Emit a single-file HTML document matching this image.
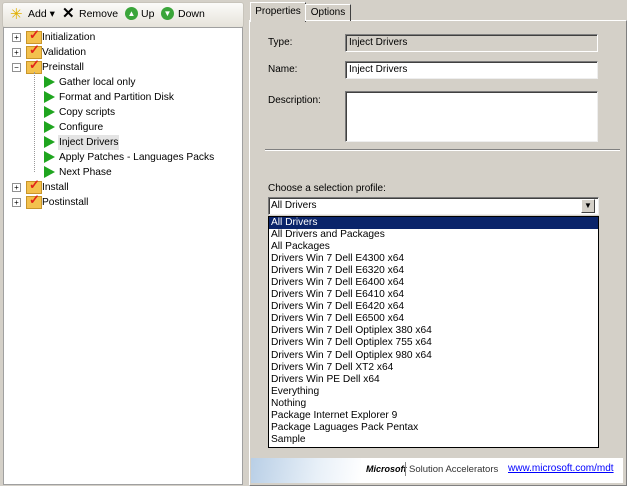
<!DOCTYPE html>
<html><head><style>
body{margin:0;width:627px;height:486px;background:#d4d0c8;font-family:"Liberation Sans",Arial,sans-serif;font-size:10px;position:relative;overflow:hidden}
.a{position:absolute}
.tb{left:2px;top:2px;width:240px;height:24px;background:linear-gradient(#fbfbf9,#e6e3da);border:1px solid #c8c4bb;border-radius:3px}
.tree{left:3px;top:27px;width:238px;height:456px;background:#fff;border:1px solid #a0a0a0}
.row{position:absolute;height:15px;line-height:15px;font-size:10.2px;white-space:nowrap}
.pm{position:absolute;width:7px;height:7px;border:1px solid #919191;background:#fff;font-size:8px;line-height:7px;text-align:center;color:#000}
.fold{position:absolute;width:14px;height:11px;background:#f3c14d;border:1px solid #c8952a}
.chk{position:absolute;color:#e2231a;font-weight:bold;font-size:13px}
.tri{position:absolute;width:0;height:0;border-left:11px solid #1fa51f;border-top:6px solid transparent;border-bottom:6px solid transparent}
.inp{background:#fff;border:1px solid #7a7a7a;border-right-color:#eee;border-bottom-color:#eee;box-shadow:inset 1px 1px 0 #404040}
.li{height:12.05px;line-height:12px;padding-left:2px;font-size:10.2px}
.circ{position:absolute;width:13px;height:13px;border-radius:50%;background:#3aa53a;color:#fff;font-size:8px;text-align:center;line-height:13px}
</style></head><body>
<div class="a tb"></div>
<div class="a" style="left:10px;top:5px;color:#e0b000;font-size:15px">✳</div>
<div class="a" style="left:28px;top:8px;font-size:10.5px">Add ▾</div>
<div class="a" style="left:62px;top:4px;font-size:15px;font-weight:bold">✕</div>
<div class="a" style="left:79px;top:8px;font-size:10.5px">Remove</div>
<div class="circ" style="left:125px;top:7px">▲</div>
<div class="a" style="left:141px;top:8px;font-size:10.5px">Up</div>
<div class="circ" style="left:161px;top:7px">▼</div>
<div class="a" style="left:178px;top:8px;font-size:10.5px">Down</div>
<div class="a tree"></div>
<div class="a" style="left:0;top:0">
<div class="pm" style="left:12px;top:33px">+</div><div class="fold" style="left:26px;top:31px"></div><div class="chk" style="left:29px;top:27px">✓</div><div class="row" style="left:42px;top:30px">Initialization</div>
<div class="pm" style="left:12px;top:48px">+</div><div class="fold" style="left:26px;top:46px"></div><div class="chk" style="left:29px;top:42px">✓</div><div class="row" style="left:42px;top:45px">Validation</div>
<div class="pm" style="left:12px;top:63px">−</div><div class="fold" style="left:26px;top:61px"></div><div class="chk" style="left:29px;top:57px">✓</div><div class="row" style="left:42px;top:60px">Preinstall</div>
<div style="position:absolute;left:34px;top:72px;height:100px;border-left:1px dotted #999"></div>
<div class="tri" style="left:44px;top:76px"></div><div class="row" style="left:59px;top:75px">Gather local only</div>
<div class="tri" style="left:44px;top:91px"></div><div class="row" style="left:59px;top:90px">Format and Partition Disk</div>
<div class="tri" style="left:44px;top:106px"></div><div class="row" style="left:59px;top:105px">Copy scripts</div>
<div class="tri" style="left:44px;top:121px"></div><div class="row" style="left:59px;top:120px">Configure</div>
<div class="tri" style="left:44px;top:136px"></div><div class="row" style="left:58px;top:135px;background:#e4e4e4;padding:0 1px">Inject Drivers</div>
<div class="tri" style="left:44px;top:151px"></div><div class="row" style="left:59px;top:150px">Apply Patches - Languages Packs</div>
<div class="tri" style="left:44px;top:166px"></div><div class="row" style="left:59px;top:165px">Next Phase</div>
<div class="pm" style="left:12px;top:183px">+</div><div class="fold" style="left:26px;top:181px"></div><div class="chk" style="left:29px;top:177px">✓</div><div class="row" style="left:42px;top:180px">Install</div>
<div class="pm" style="left:12px;top:198px">+</div><div class="fold" style="left:26px;top:196px"></div><div class="chk" style="left:29px;top:192px">✓</div><div class="row" style="left:42px;top:195px">Postinstall</div>
</div>
<div class="a" style="left:249px;top:20px;width:376px;height:464px;border:1px solid #fff;border-right-color:#808080;border-bottom-color:#808080"></div>
<div class="a" style="left:250px;top:2px;width:54px;height:19px;background:#d4d0c8;border:1px solid #fff;border-bottom:none;border-right-color:#404040;line-height:18px;text-align:center">Properties</div>
<div class="a" style="left:305px;top:4px;width:44px;height:16px;border:1px solid #fff;border-right-color:#404040;border-bottom:none;line-height:16px;text-align:center">Options</div>
<div class="a" style="left:268px;top:37px">Type:</div>
<div class="a" style="left:345px;top:34px;border:1px solid #808080;border-right-color:#fff;border-bottom-color:#fff;box-shadow:inset 1px 1px 0 #404040;line-height:16px;padding-left:3px;box-sizing:border-box;width:253px;height:18px">Inject Drivers</div>
<div class="a" style="left:268px;top:64px">Name:</div>
<div class="a inp" style="left:345px;top:61px;width:253px;height:18px;box-sizing:border-box;line-height:16px;padding-left:3px">Inject Drivers</div>
<div class="a" style="left:268px;top:95px">Description:</div>
<div class="a inp" style="left:345px;top:91px;width:253px;height:51px;box-sizing:border-box"></div>
<div class="a" style="left:265px;top:149px;width:355px;border-top:1px solid #808080;border-bottom:1px solid #fff"></div>
<div class="a" style="left:268px;top:183px">Choose a selection profile:</div>
<div class="a inp" style="left:268px;top:197px;width:331px;height:18px;box-sizing:border-box;line-height:16px;padding-left:2px">All Drivers</div>
<div class="a" style="left:581px;top:199px;width:14px;height:14px;background:#d4d0c8;border:1px solid #fff;border-right-color:#404040;border-bottom-color:#404040;box-sizing:border-box;font-size:8px;text-align:center;line-height:12px">▼</div>
<div class="a" style="left:268px;top:216px;width:329px;height:230px;background:#fff;border:1px solid #000">
<div class="li" style="background:#0a246a;color:#fff">All Drivers</div>
<div class="li">All Drivers and Packages</div><div class="li">All Packages</div>
<div class="li">Drivers Win 7 Dell E4300 x64</div><div class="li">Drivers Win 7 Dell E6320 x64</div>
<div class="li">Drivers Win 7 Dell E6400 x64</div><div class="li">Drivers Win 7 Dell E6410 x64</div>
<div class="li">Drivers Win 7 Dell E6420 x64</div><div class="li">Drivers Win 7 Dell E6500 x64</div>
<div class="li">Drivers Win 7 Dell Optiplex 380 x64</div><div class="li">Drivers Win 7 Dell Optiplex 755 x64</div>
<div class="li">Drivers Win 7 Dell Optiplex 980 x64</div><div class="li">Drivers Win 7 Dell XT2 x64</div>
<div class="li">Drivers Win PE Dell x64</div><div class="li">Everything</div><div class="li">Nothing</div>
<div class="li">Package Internet Explorer 9</div><div class="li">Package Laguages Pack Pentax</div><div class="li">Sample</div>
</div>
<div class="a" style="left:251px;top:458px;width:372px;height:25px;background:#fff"></div>
<div class="a" style="left:251px;top:458px;width:110px;height:25px;background:linear-gradient(100deg,#b9cfe6,#e8f0f8 60%,#fff)"></div>
<div class="a" style="left:366px;top:464px;font-size:9px;font-weight:bold;font-style:italic">Microsoft</div>
<div class="a" style="left:405px;top:462px;height:14px;border-left:1px solid #888"></div>
<div class="a" style="left:409px;top:464px;font-size:9.5px;color:#333">Solution Accelerators</div>
<div class="a" style="left:508px;top:463px;color:#00f;text-decoration:underline;font-size:10px">www.microsoft.com/mdt</div>
</body></html>
